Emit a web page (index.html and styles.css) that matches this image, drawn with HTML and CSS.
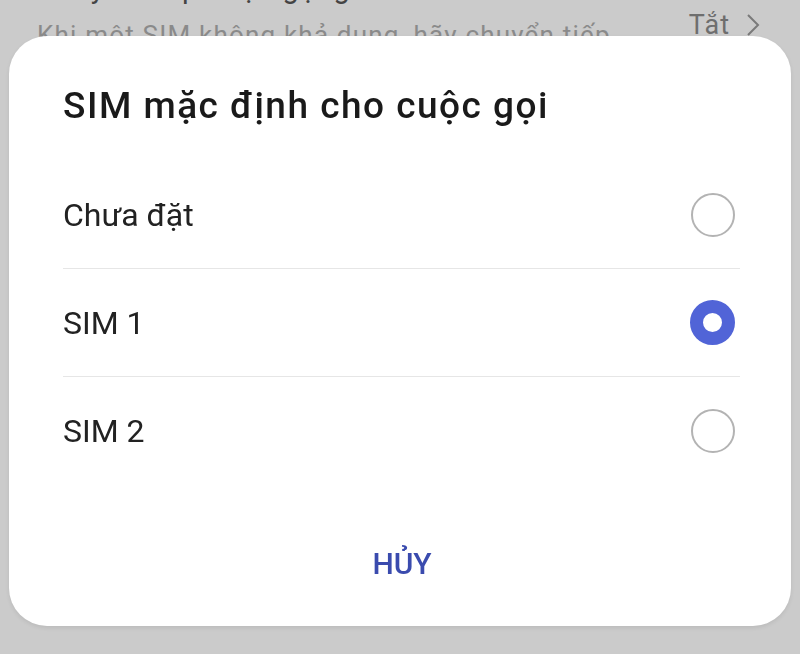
FILE: index.html
```html
<!DOCTYPE html>
<html lang="vi">
<head>
    <meta charset="UTF-8">
    <meta name="viewport" content="width=device-width, initial-scale=1.0">
    <title>SIM mặc định cho cuộc gọi</title>
    <link rel="stylesheet" href="styles.css">
</head>
<body>
    <div class="setting">
        <div class="setting-text">
            <div class="setting-title">Chuyển tiếp cuộc gọi giữa các SIM</div>
            <div class="setting-summary">Khi một SIM không khả dụng, hãy chuyển tiếp</div>
        </div>
        <div class="setting-value">
            Tắt
            <svg class="chevron" width="14" height="24" viewBox="0 0 14 24">
                <path d="M2 2 L12 12 L2 22" fill="none" stroke="#7a7a7a" stroke-width="2"/>
            </svg>
        </div>
    </div>

    <div class="dialog">
        <h1 class="dialog-title">SIM mặc định cho cuộc gọi</h1>
        <ul class="options">
            <li class="option">
                <span>Chưa đặt</span>
                <span class="radio"></span>
            </li>
            <li class="option">
                <span>SIM 1</span>
                <span class="radio checked"></span>
            </li>
            <li class="option">
                <span>SIM 2</span>
                <span class="radio"></span>
            </li>
        </ul>
        <div class="dialog-actions">
            <button class="btn-cancel">HỦY</button>
        </div>
    </div>
</body>
</html>
```

FILE: styles.css
```css
body {
    margin: 0;
    background: #cbcbcb;
    font-family: 'Roboto', 'Noto Sans', sans-serif;
    overflow: hidden;
}

/* settings list behind the dialog */
.setting {
    display: flex;
    justify-content: space-between;
    padding: 0 40px 0 37px;
    margin-top: -29px;
}

.setting-title {
    font-size: 29px;
    line-height: 34px;
    margin-bottom: 13px;
    letter-spacing: 1px;
    color: #444;
}

.setting-summary {
    font-size: 26px;
    line-height: 34px;
    letter-spacing: 1.2px;
    color: #8a8a8a;
}

.setting-value {
    display: flex;
    align-items: center;
    align-self: flex-start;
    gap: 16px;
    margin-top: 37px;
    font-size: 27px;
    line-height: 34px;
    letter-spacing: 1px;
    color: #6e6e6e;
}

/* dialog */
.dialog {
    position: fixed;
    left: 9px;
    top: 36px;
    width: 782px;
    height: 590px;
    box-sizing: border-box;
    padding-top: 50px;
    background: #fff;
    border-radius: 38px;
    box-shadow: 0 2px 4px rgba(0, 0, 0, 0.08);
}

.dialog-title {
    margin: 0 0 35px 54px;
    font-size: 37px;
    line-height: 40px;
    letter-spacing: 1.5px;
    font-weight: 500;
    color: #1a1a1a;
}

.options {
    list-style: none;
    margin: 0 51px 0 54px;
    padding: 0;
}

.option {
    display: flex;
    justify-content: space-between;
    align-items: center;
    height: 107px;
    padding-right: 5px;
    font-size: 32px;
    color: #222;
    border-bottom: 1px solid #e6e6e6;
}

.option:last-child {
    border-bottom: none;
}

.radio {
    width: 44px;
    height: 44px;
    box-sizing: border-box;
    border: 2px solid #b3b3b3;
    border-radius: 50%;
}

.radio.checked {
    width: 45px;
    height: 45px;
    border: 13px solid #5164d7;
}

.dialog-actions {
    display: flex;
    justify-content: center;
    padding-top: 60px;
}

.btn-cancel {
    background: none;
    border: none;
    padding: 0;
    margin-left: 4px;
    font-family: inherit;
    font-size: 30px;
    line-height: 40px;
    font-weight: 500;
    color: #3a4bae;
    cursor: pointer;
}
```
